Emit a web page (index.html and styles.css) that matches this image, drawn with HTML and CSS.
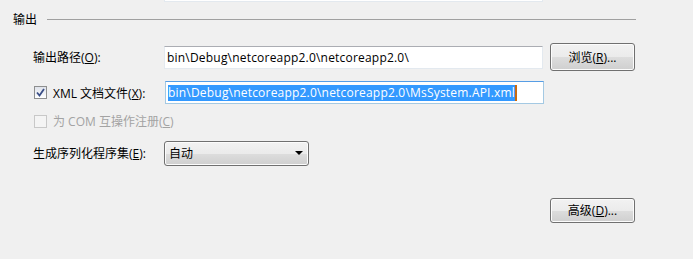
FILE: index.html
```html
<!DOCTYPE html>
<html lang="zh-CN">
<head>
    <meta charset="UTF-8">
    <title>输出</title>
    <link rel="stylesheet" href="styles.css">
</head>
<body>
    <div class="prev-field"></div>

    <div class="group-head">
        <span>输出</span>
        <div class="rule"></div>
    </div>

    <div class="form">
        <div class="row row-path">
            <span class="lbl">输出路径(<u>O</u>):</span>
            <div class="textbox">bin\Debug\netcoreapp2.0\netcoreapp2.0\</div>
            <button class="btn">浏览(<u>R</u>)...</button>
        </div>

        <div class="row row-xml">
            <label class="lbl check">
                <span class="box checked">
                    <svg width="9" height="9" viewBox="0 0 9 9"><path d="M1 4.5 L3.5 7.5 L8 1" fill="none" stroke="#3b4f87" stroke-width="1.8"/></svg>
                </span>
                <span>XML 文档文件(<u>X</u>):</span>
            </label>
            <div class="textbox focused"><span class="sel">bin\Debug\netcoreapp2.0\netcoreapp2.0\MsSystem.API.xml</span><span class="caret"></span></div>
        </div>

        <div class="row row-com">
            <label class="lbl check disabled">
                <span class="box"></span>
                <span>为 COM 互操作注册(<u>C</u>)</span>
            </label>
        </div>

        <div class="row row-serial">
            <span class="lbl">生成序列化程序集(<u>E</u>):</span>
            <div class="dropdown">
                <span>自动</span>
                <span class="arrow"></span>
            </div>
        </div>

        <div class="row row-adv">
            <button class="btn">高级(<u>D</u>)...</button>
        </div>
    </div>
</body>
</html>
```

FILE: styles.css
```css
body {
    margin: 0;
    background-color: #f0f0f0;
    font-family: "Open Sans", "Noto Sans CJK SC", sans-serif;
    font-size: 12px;
    color: #000;
    height: 259px;
    overflow: hidden;
}
u {
    text-decoration: underline;
    text-underline-offset: 1px;
}
.prev-field {
    margin-left: 164px;
    width: 377px;
    height: 1px;
    background-color: #fff;
    border: 1px solid #e3e9ef;
    border-top: none;
}
.group-head {
    display: flex;
    align-items: center;
    gap: 10px;
    height: 20px;
    margin-top: 7px;
    padding-left: 13px;
    width: 623px;
}
.rule {
    flex-grow: 1;
    height: 1px;
    background-color: #a0a0a0;
}
.form {
    padding-left: 33px;
}
.row {
    display: flex;
    align-items: center;
}
.lbl {
    width: 131px;
    flex-shrink: 0;
    white-space: nowrap;
}
.check {
    display: flex;
    align-items: center;
    gap: 6px;
    padding-left: 1px;
}
.box {
    flex-shrink: 0;
    width: 11px;
    height: 11px;
    border: 1px solid #8e8f8f;
    background: linear-gradient(#f4f4f4, #ffffff);
    display: flex;
    align-items: center;
    justify-content: center;
}
.box.checked {
    background: linear-gradient(#dfe3eb, #ffffff);
}
.disabled {
    color: #a3a3a3;
}
.disabled .box {
    border-color: #c8c8c8;
    background: #f4f4f4;
}
.textbox {
    box-sizing: border-box;
    width: 379px;
    height: 23px;
    background-color: #fff;
    border: 1px solid #e3e9ef;
    border-top-color: #abadb3;
    padding-left: 2px;
    display: flex;
    align-items: center;
    white-space: nowrap;
    overflow: hidden;
    letter-spacing: 0.2px;
}
.textbox.focused {
    border-color: #a4c9e3;
    border-top-color: #569de5;
}
.sel {
    background-color: #3399ff;
    color: #fff;
    line-height: 16px;
}
.caret {
    width: 2px;
    height: 16px;
    background-color: #c86a10;
}
.btn {
    box-sizing: border-box;
    width: 85px;
    height: 28px;
    margin-left: 7px;
    font-family: "Open Sans", "Noto Sans CJK SC", sans-serif;
    font-size: 12px;
    color: #000;
    border: 1px solid #707070;
    border-radius: 3px;
    background: linear-gradient(#f2f2f2 0%, #ebebeb 50%, #dddddd 51%, #cfcfcf 100%);
    box-shadow: inset 0 0 0 1px #fcfcfc;
    padding: 0;
}
.row-path {
    margin-top: 14px;
    height: 28px;
}
.row-xml {
    margin-top: 10px;
    height: 23px;
}
.row-com {
    margin-top: 7px;
    height: 20px;
}
.row-serial {
    margin-top: 10px;
    height: 24px;
}
.dropdown {
    box-sizing: border-box;
    width: 145px;
    height: 25px;
    border: 1px solid #707070;
    border-radius: 3px;
    background: linear-gradient(#f2f2f2 0%, #ebebeb 50%, #dddddd 51%, #cfcfcf 100%);
    box-shadow: inset 0 0 0 1px #fcfcfc;
    display: flex;
    align-items: center;
    justify-content: space-between;
    padding: 0 5px 0 4px;
}
.arrow {
    width: 0;
    height: 0;
    border-left: 4px solid transparent;
    border-right: 4px solid transparent;
    border-top: 4px solid #000;
}
.row-adv {
    margin-top: 33px;
    height: 24px;
    padding-left: 510px;
}
.row-adv .btn {
    height: 25px;
}
```
